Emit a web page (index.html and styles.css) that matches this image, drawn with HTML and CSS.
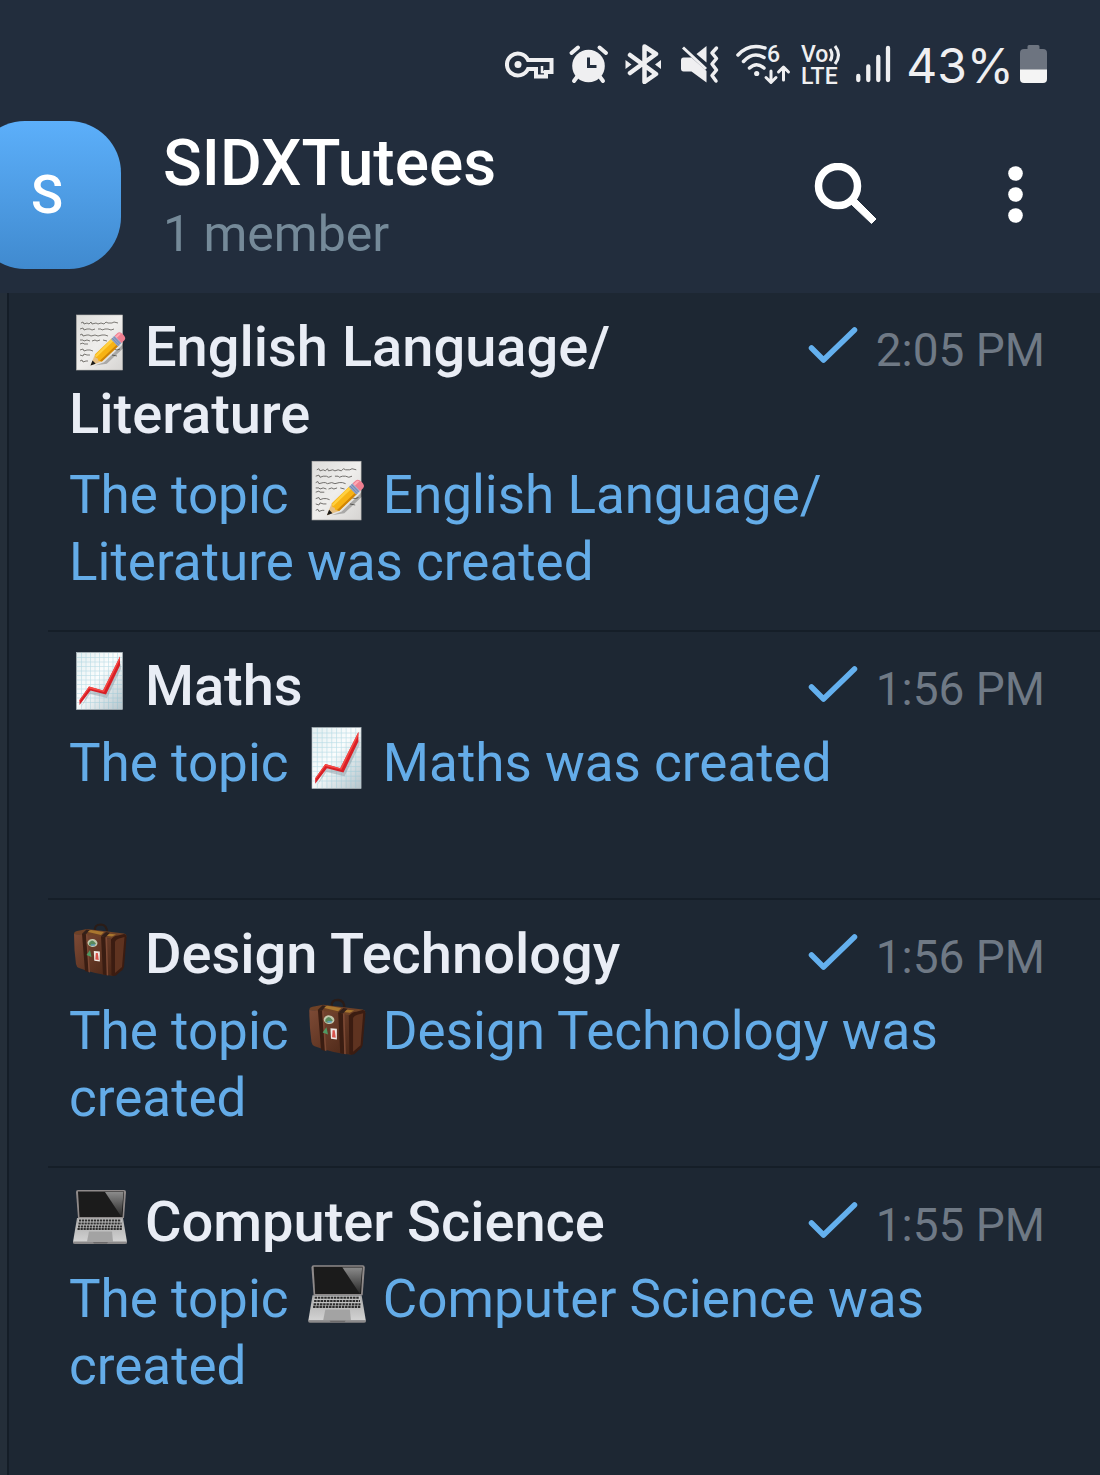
FILE: index.html
```html
<!DOCTYPE html>
<html lang="en">
  <head>
    <meta charset="UTF-8">
    <meta name="viewport" content="width=device-width, initial-scale=1.0">
    <title>SIDXTutees</title>
    <link rel="stylesheet" href="styles.css">
  </head>
  <body>
  <!-- shared icons -->
  <svg class="sprite" width="0" height="0" aria-hidden="true">
    <defs>
      <linearGradient id="paper" x1="0" y1="0" x2="1" y2="1">
        <stop offset="0" stop-color="#dedddb"/>
        <stop offset="0.5" stop-color="#efeeec"/>
        <stop offset="1" stop-color="#d6d4d2"/>
      </linearGradient>
      <linearGradient id="chartPaper" x1="0" y1="0" x2="1" y2="1">
        <stop offset="0" stop-color="#e3eef0"/>
        <stop offset="0.45" stop-color="#fbfdfd"/>
        <stop offset="1" stop-color="#b4c4cb"/>
      </linearGradient>
      <linearGradient id="leather" x1="0" y1="0" x2="1" y2="1">
        <stop offset="0" stop-color="#7d4a35"/>
        <stop offset="1" stop-color="#4a2616"/>
      </linearGradient>
      <linearGradient id="glare" x1="0" y1="0" x2="0" y2="1">
        <stop offset="0" stop-color="#8b8b8b"/>
        <stop offset="1" stop-color="#262626"/>
      </linearGradient>
      <linearGradient id="metal" x1="0" y1="0" x2="0" y2="1">
        <stop offset="0" stop-color="#a9a9a9"/>
        <stop offset="1" stop-color="#d3d3d3"/>
      </linearGradient>
    </defs>

    <symbol id="memo" viewBox="0 0 60 60">
      <rect x="7.5" y="4" width="46" height="55" fill="url(#paper)" stroke="#b9b7b4" stroke-width="0.6"/>
      <g fill="none" stroke="#6d6b67" stroke-width="0.9">
        <path d="M12 12l2-1 1 2 3-1 2 1 2-2 1 2 4-1 2 1 3-1 3 1 2-2 2 1 4 0 2-1 4 1"/>
        <path d="M11 18l3-1 1 2 3-1 3 0 2 1 3-1 M29 18l3 0 1 1 3-1 3 0 3 1 3-1"/>
        <path d="M11 24l2-1 1 2 4-1 2 0 2 1 4-1 3 1 4-1 3 0 3 1"/>
        <path d="M11 29l3 0 1 1 3-1 3 1 M23 30l3-1 2 1 3-1 M34 29l4 1"/>
        <path d="M11 33l3-1 1 1 4 0"/>
        <path d="M11 39l3-1 1 2 3-1 3 0 3 1 M44 38l4 1 3-1"/>
        <path d="M11 44l3 1 1-2 3 1 3 0 M43 44l5 1"/>
        <path d="M11 50l2-1 1 2 3-1 2 0"/>
      </g>
      <g transform="translate(21.5 54.5) rotate(-43.5)">
        <path d="M3 3L12 7h24l4-1-4 4H13z" fill="#000" opacity="0.25"/>
        <path d="M0 0L11-5V5z" fill="#e6bf82"/>
        <path d="M0 0L5-2.3V2.3z" fill="#1b1a18"/>
        <path d="M11-5L34-5V5H11L9 2 10 0 9-2z" fill="#f7b314"/>
        <path d="M10-4L34-5V-2H10z" fill="#ffd03f"/>
        <path d="M10 3h24v2H11z" fill="#cf8508"/>
        <rect x="33" y="-5" width="5" height="10" fill="#91a3c6"/>
        <path d="M34.500-5V5M36.500-5V5" stroke="#6f82a8" stroke-width="0.7"/>
        <path d="M38-5h4q3 0 3 5t-3 5h-4z" fill="#ee7e90"/>
        <path d="M38-4h4q1 0 2 2h-6z" fill="#ffa9b3"/>
      </g>
    </symbol>

    <symbol id="chart" viewBox="0 0 60 60">
      <rect x="7.5" y="2.500" width="46" height="57" fill="url(#chartPaper)" stroke="#b6c1c6" stroke-width="0.6"/>
      <path d="M12.500 3v56M17 3v56M21.500 3v56M26 3v56M30.500 3v56M35 3v56M39.500 3v56M44 3v56M48.500 3v56M8 7.500h45M8 12h45M8 16.500h45M8 21h45M8 25.500h45M8 30h45M8 34.500h45M8 39h45M8 43.500h45M8 48h45M8 52.500h45" stroke="#7fc1d4" stroke-width="0.6" opacity="0.5"/>
      <path d="M12 57l9-13 17 4 14-29v-6L36 43l-15-3z" fill="#7d8d96" opacity="0.4"/>
      <path d="M10.500 50L20 36.500l14 4L51 6.500v9L37 44.500 21.500 40.500 10.500 55z" fill="#d81f26"/>
      <path d="M10.500 50L20 36.500l14 4L51 6.500v3L35 42l-15-3.500-9.500 13z" fill="#f64a45"/>
    </symbol>

    <symbol id="luggage" viewBox="0 0 60 60">
      <path d="M26 13q-1-6.500 6-6.500 6 .5 6 8" fill="none" stroke="#2a1c17" stroke-width="2.200"/>
      <path d="M5 16Q5 13.500 8 13L18 11l37 4.500q2.500.5 2.500 3L43 21z" fill="#6e4126"/>
      <path d="M17 13.500l5-1.500 13 2-3 3zM39 15.500l8 1-4 2-6-.8z" fill="#a9772f"/>
      <path d="M5 16q19 1 38 5l1.500 37q-19-2-34.500-8-2.500-1-3-4Q5 32 5 16z" fill="url(#leather)"/>
      <path d="M42 21.500q3-4 7-4l6-1.500q3 0 2.500 4L55 49q-1 3-3 4l-5 4.500q-3 1-4.500-.5z" fill="#3b1c11"/>
      <path d="M46 23.500q1-2 4-3l5.500-1.500L53 49l-7 6z" fill="#5f3320"/>
      <path d="M13 15.800l4 .5 3 38-4-1.200zM32 18.200l4.500 1 1.500 38-4-.6z" fill="#3a1d12"/>
      <path d="M17 16.300l1.500.2 2.500 38-1.500-.5zM36.500 19.200l1.500.3 1.200 38-1.500-.2z" fill="#7c4934"/>
      <path d="M13 15.800l4.500-4.300 3 .6-3.500 4.200zM32 18.200l5-4.200 4 .8-4.500 4.500z" fill="#33201a"/>
      <ellipse cx="23.500" cy="25" rx="5" ry="4" fill="#c2c9ae" transform="rotate(8 23.500 25)"/>
      <path d="M20 25q3-5 6.500 0l.5 1q-4 3-7 1z" fill="#5a8a5c"/>
      <path d="M22 27h4" stroke="#5d9ac0" stroke-width="1.300"/>
      <path d="M21 32l1.500 7-5-2z" fill="#4f9a63"/>
      <path d="M24.800 33l6 .6v10l-5.500-.8z" fill="#efe8e4"/>
      <path d="M26.800 35h2l1 7-3.500-.5z" fill="#d8544c"/>
    </symbol>

    <symbol id="laptop" viewBox="0 0 60 60">
      <path d="M9 4h46q2 0 2 2l-2 26H9L7 6q0-2 2-2z" fill="#8f8a8a"/>
      <path d="M9 5.500h46L53.500 31h-43z" fill="#1b1b1b"/>
      <path d="M36 6h18.500l-2 25z" fill="url(#glare)"/>
      <path d="M8 32h46l4 24H4z" fill="url(#metal)"/>
      <path d="M9.500 33h43l1.500 11H8z" fill="#c2c2c2"/>
      <path d="M10 34.500h42M9.500 37.500h43M9 40.500h44M8.500 43h45" stroke="#2d2d2d" stroke-width="1.900" stroke-dasharray="2.300 0.700"/>
      <path d="M20 45.500h23l1 10H18z" fill="#a3a3a3"/>
      <path d="M4 55.500h54v1.500q0 1-2 1H6q-2 0-2-1z" fill="#8b898a"/>
      <path d="M24 56h15l-1 1.500H25z" fill="#6c6a6b"/>
    </symbol>

    <symbol id="check" viewBox="0 0 50 40">
      <path d="M3.500 22l12 12L46.500 4" fill="none" stroke="currentColor" stroke-width="5.500" stroke-linecap="round" stroke-linejoin="round"/>
    </symbol>
  </svg>

  <div class="status-bar">
    <svg width="50" height="40" viewBox="0 0 50 40">
      <path d="M23 16H46.500V28H41V32.500H31V25H23A11 11 0 1 1 23 16z" fill="none" stroke="currentColor" stroke-width="4"/>
      <path d="M37 22v6h5" fill="none" stroke="currentColor" stroke-width="2.500"/>
      <circle cx="13" cy="20.500" r="3.500" fill="currentColor"/>
    </svg>
    <svg width="44" height="40" viewBox="0 0 44 40">
      <circle cx="21.500" cy="22" r="16.300" fill="currentColor"/>
      <path d="M4.500 9l6.500-5.500M39 9l-6.500-5.500M10 33l-3 4M33 33l3 4" stroke="currentColor" stroke-width="4" stroke-linecap="round"/>
      <path d="M21.500 13.500v9h8" fill="none" stroke="#222d3d" stroke-width="3"/>
    </svg>
    <svg width="42" height="40" viewBox="0 0 42 40">
      <path d="M7 11L33 30 21.500 38V2.500L33 10 7 29" fill="none" stroke="currentColor" stroke-width="4.500" stroke-linecap="round" stroke-linejoin="round"/>
      <path d="M2.500 16v9l6-4.500zM38 16v9l-6-4.500z" fill="currentColor"/>
    </svg>
    <svg width="45" height="40" viewBox="0 0 45 40">
      <path d="M6.500 13.500h8L29.500 27v11.500L14.500 27.500h-8q-2.500 0-2.500-3V16.500q0-3 2.500-3zM19.500 10L29.500 2v16.500z" fill="currentColor"/>
      <path d="M6 3.500L29 25" stroke="currentColor" stroke-width="3"/>
      <path d="M39.500 4L35 9l4.500 5.500L35 20l4.500 6-4.500 5.500 4 5.500" fill="none" stroke="currentColor" stroke-width="3.500" stroke-linecap="round" stroke-linejoin="round"/>
    </svg>
    <svg class="wifi" width="55" height="40" viewBox="0 0 55 40">
      <g fill="none" stroke="currentColor" stroke-width="3.500" stroke-linecap="round" stroke-linejoin="round">
        <path d="M4 11Q15-1 31 4M9.500 17.500Q19 7 30 13.500M15.500 24q7-6.500 14.500 0"/>
        <path d="M37 27v11M32 33.500l5 5 5-5M49.500 36V23.500M44.500 28l5-5 5 5" stroke-width="3"/>
      </g>
      <circle cx="22.700" cy="29.500" r="2.600" fill="currentColor"/>
      <text x="33" y="18">6</text>
    </svg>
    <svg class="volte" width="41" height="40" viewBox="0 0 41 40">
      <text x="0" y="18">Vo</text>
      <text x="0" y="40">LTE</text>
      <path d="M29 5q4 6 0 12M34 2q7 9 0 18" fill="none" stroke="currentColor" stroke-width="3"/>
    </svg>
    <svg width="40" height="40" viewBox="0 0 40 40">
      <path d="M4.300 32v4M14.300 22.500V36M24.300 13v23M34 4v32" stroke="currentColor" stroke-width="4.300" stroke-linecap="round"/>
    </svg>
    <span class="battery-level">43%</span>
    <svg width="27" height="40" viewBox="0 0 27 40">
      <path d="M9 1h9q1.500 0 1.500 1.500V5H23q4 0 4 4v17H0V9q0-4 4-4h3.500V2.500Q7.500 1 9 1z" fill="#6d7480"/>
      <path d="M0 25.500h27V35q0 4-4 4H4q-4 0-4-4z" fill="#f4f4f4"/>
    </svg>
  </div>

  <header class="chat-header">
    <div class="avatar">S</div>
    <div class="chat-info">
      <h1>SIDXTutees</h1>
      <p>1 member</p>
    </div>
    <button class="icon-btn" type="button" aria-label="Search">
      <svg width="64" height="64" viewBox="0 0 64 64">
        <circle cx="25" cy="23" r="19.500" fill="none" stroke="currentColor" stroke-width="7.500"/>
        <path d="M39 38l3-3L63 56l-4.500 4.500L38 41z" fill="currentColor" stroke="currentColor" stroke-linejoin="round"/>
      </svg>
    </button>
    <button class="icon-btn" type="button" aria-label="More options">
      <svg width="64" height="64" viewBox="0 0 64 64">
        <g fill="currentColor">
          <circle cx="32.500" cy="10.500" r="7.300"/>
          <circle cx="32.500" cy="31.500" r="7.300"/>
          <circle cx="32.500" cy="52.500" r="7.300"/>
        </g>
      </svg>
    </button>
  </header>

  <main class="panel">
    <ul class="topics">
      <li class="topic">
        <div class="topic-head">
          <h2 class="two-lines"><svg class="emoji"><use href="#memo"/></svg> English Language/<wbr>Literature</h2>
          <svg class="check"><use href="#check"/></svg>
          <time>2:05 PM</time>
        </div>
        <p class="message">The topic <svg class="emoji"><use href="#memo"/></svg> English Language/<wbr>Literature was created</p>
      </li>
      <li class="topic">
        <div class="topic-head">
          <h2><svg class="emoji"><use href="#chart"/></svg> Maths</h2>
          <svg class="check"><use href="#check"/></svg>
          <time>1:56 PM</time>
        </div>
        <p class="message">The topic <svg class="emoji"><use href="#chart"/></svg> Maths was created</p>
      </li>
      <li class="topic">
        <div class="topic-head">
          <h2><svg class="emoji"><use href="#luggage"/></svg> Design Technology</h2>
          <svg class="check"><use href="#check"/></svg>
          <time>1:56 PM</time>
        </div>
        <p class="message">The topic <svg class="emoji"><use href="#luggage"/></svg> Design Technology was created</p>
      </li>
      <li class="topic">
        <div class="topic-head">
          <h2><svg class="emoji"><use href="#laptop"/></svg> Computer Science</h2>
          <svg class="check"><use href="#check"/></svg>
          <time>1:55 PM</time>
        </div>
        <p class="message">The topic <svg class="emoji"><use href="#laptop"/></svg> Computer Science was created</p>
      </li>
    </ul>
  </main>
  </body>
</html>
```
FILE: styles.css
```css
* {
  box-sizing: border-box;
}
html, body {
  height: 100%;
  margin: 0;
}
body {
  display: flex;
  flex-direction: column;
  overflow-x: hidden;
  background-color: #222d3d;
  font-family: Roboto, "Liberation Sans", sans-serif;
}
h1, h2, p, ul {
  margin: 0;
  padding: 0;
}
.sprite {
  position: absolute;
}

/* status bar */
.status-bar {
  display: flex;
  justify-content: flex-end;
  align-items: center;
  gap: 12px;
  padding: 44px 53px 0 0;
  color: #efeff1;
}
.status-bar svg {
  flex: none;
}
.wifi,
.volte {
  overflow: visible;
  fill: currentColor;
  font-size: 23px;
  font-weight: 500;
}
.battery-level {
  margin-right: -6px;
  padding-top: 4px;
  font-family: Inter, sans-serif;
  font-size: 48px;
  line-height: 36px;
}

/* header */
.chat-header {
  display: flex;
  align-items: center;
  padding: 37px 53px 24px 0;
  color: #fff;
}
.avatar {
  flex: none;
  width: 148px;
  height: 148px;
  margin-left: -27px;
  border-radius: 52px;
  background: linear-gradient(#5caffa, #408acf);
  font-size: 53px;
  font-weight: 500;
  line-height: 148px;
  text-align: center;
}
.chat-info {
  flex: 1;
  padding: 2px 0 0 42px;
}
.chat-info h1 {
  font-size: 64px;
  font-weight: 500;
  line-height: 76px;
}
.chat-info p {
  color: #758a99;
  font-size: 50px;
  line-height: 64px;
}
.icon-btn {
  margin-left: 106px;
  padding: 0;
  border: 0;
  background: none;
  color: #fff;
}
.icon-btn svg {
  display: block;
}

/* topic list */
.panel {
  display: grid;
  flex: 1 0 auto;
  padding-left: 7px;
  background-color: #242e39;
}
.topics {
  padding-left: 39px;
  border-left: 2px solid #141d27;
  background-color: #1d2733;
  list-style: none;
}
.topic {
  padding: 21px 55px 34px 21px;
  border-bottom: 2px solid #151e28;
}
.topic:last-child {
  border-bottom: 0;
}
.topic-head {
  display: flex;
  align-items: baseline;
}
.topic h2 {
  flex: 1;
  color: #e9edf5;
  font-size: 56px;
  font-weight: 500;
  line-height: 67px;
}
.topic h2.two-lines {
  padding-bottom: 4px;
}
.check {
  width: 50px;
  height: 40px;
  color: #64b0ee;
}
.topic time {
  margin-left: 18px;
  color: #6f7985;
  font-size: 46px;
}
.message {
  min-height: 134px;
  margin-top: 10px;
  padding-right: 24px;
  color: #64ace8;
  font-size: 53px;
  line-height: 67px;
}
.emoji {
  width: 60px;
  height: 60px;
  margin: -8px 2px 0 0;
  vertical-align: -5px;
}
.message .emoji {
  width: 64px;
  height: 64px;
  margin: -12px 2px 0;
  vertical-align: -8px;
}
```
